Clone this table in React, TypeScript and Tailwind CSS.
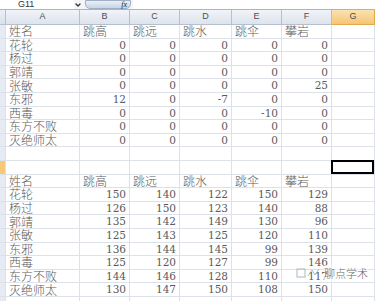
import { ChevronDown } from 'lucide-react'

const cols = ['A', 'B', 'C', 'D', 'E', 'F', 'G']
const heads = ['姓名', '跳高', '跳远', '跳水', '跳伞', '攀岩']

const names = ['花轮', '杨过', '郭靖', '张敏', '东邪', '西毒', '东方不败', '灭绝师太']

const table1 = [
  [0, 0, 0, 0, 0],
  [0, 0, 0, 0, 0],
  [0, 0, 0, 0, 0],
  [0, 0, 0, 0, 25],
  [12, 0, -7, 0, 0],
  [0, 0, 0, -10, 0],
  [0, 0, 0, 0, 0],
  [0, 0, 0, 0, 0],
]

const table2 = [
  [150, 140, 122, 150, 129],
  [126, 150, 123, 140, 88],
  [135, 142, 149, 130, 96],
  [125, 143, 125, 120, 110],
  [136, 144, 145, 99, 139],
  [125, 120, 127, 99, 146],
  [144, 146, 128, 110, 117],
  [130, 147, 150, 108, 150],
]

const cjk = { fontFamily: '"SimSun", "Noto Sans CJK SC", sans-serif' }
const num = { fontFamily: '"DejaVu Serif", "Liberation Serif", serif' }

type Row = { kind: 'head' } | { kind: 'data'; name: string; vals: number[] } | { kind: 'empty'; sel?: boolean }

const rows: Row[] = [
  { kind: 'head' },
  ...names.map((n, i) => ({ kind: 'data' as const, name: n, vals: table1[i] })),
  { kind: 'empty' },
  { kind: 'empty', sel: true },
  { kind: 'head' },
  ...names.map((n, i) => ({ kind: 'data' as const, name: n, vals: table2[i] })),
  { kind: 'empty' },
]

const cell = 'h-[13.6px] border-r border-b border-[#dde2ea] flex items-center overflow-hidden leading-none whitespace-nowrap'
const txt = 'pl-[3px] text-[12px] font-light text-[#5a5a5a]'

function SheetRow({ row }: { row: Row }) {
  const sel = row.kind === 'empty' && row.sel
  return (
    <>
      <div className={`${cell} ${sel ? 'bg-[#f6c979]' : 'bg-[#e6ebf3]'} border-[#b9c3d3]`} />
      {row.kind === 'head' && (
        <>
          {heads.map(h => (
            <div key={h} className={`${cell} ${txt}`} style={cjk}>{h}</div>
          ))}
          <div className={cell} />
        </>
      )}
      {row.kind === 'data' && (
        <>
          <div className={`${cell} ${txt}`} style={cjk}>{row.name}</div>
          {row.vals.map((v, i) => (
            <div key={i} className={`${cell} justify-end pr-[3px] text-[10.5px] text-[#5a5a5a]`} style={num}>{v}</div>
          ))}
          <div className={cell} />
        </>
      )}
      {row.kind === 'empty' && (
        <>
          {[0, 1, 2, 3, 4, 5].map(i => <div key={i} className={cell} />)}
          <div className={`${cell} relative overflow-visible`}>
            {sel && <div className="absolute inset-0 -top-px -left-px border-2 border-black" />}
          </div>
        </>
      )}
    </>
  )
}

export default function App() {
  return (
    <div className="w-[375px] h-[301px] overflow-hidden bg-white relative">
      {/* formula bar strip */}
      <div className="h-[10px] flex items-center bg-[#f3f5f8] border-b border-[#aab4c3] overflow-hidden">
        <div className="w-[74px] h-full flex items-center pl-[18px] text-[9px] leading-none text-[#333] bg-white" style={{ fontFamily: '"Liberation Sans", sans-serif' }}>G11</div>
        <ChevronDown className="w-[8px] h-[8px] text-[#333]" strokeWidth={4} />
        <div className="ml-[3px] w-[46px] h-[9px] rounded-b-[5px] bg-gradient-to-b from-[#e9eff7] to-[#c9d5e4] border border-[#9fb0c6] flex items-center justify-end pr-[3px]">
          <span className="text-[8px] italic leading-none text-[#222]" style={{ fontFamily: '"Liberation Serif", serif' }}>fx</span>
        </div>
        <div className="flex-1 h-full bg-white ml-[2px]" />
      </div>

      <div className="grid grid-cols-[6px_74px_50px_50px_52px_50px_50px_43px]">
        {/* column header */}
        <div className="h-[15px] bg-gradient-to-b from-[#edf1f7] to-[#d9e0ea] border-r border-b border-[#b4bfcf]" />
        {cols.map(c => (
          <div
            key={c}
            className={`h-[15px] flex items-center justify-center text-[9px] text-[#4a4f57] border-r border-b ${
              c === 'G'
                ? 'bg-gradient-to-b from-[#fbe2b1] to-[#f5c575] border-[#e0a94b]'
                : 'bg-gradient-to-b from-[#f1f4f8] to-[#dde3ec] border-[#b4bfcf]'
            }`}
            style={{ fontFamily: '"Liberation Sans", sans-serif' }}
          >
            {c}
          </div>
        ))}
        {rows.map((r, i) => <SheetRow key={i} row={r} />)}
      </div>

      {/* watermark */}
      <div className="absolute left-[296px] top-[265px] flex items-center gap-[2px] whitespace-nowrap text-[11px] font-light text-[#444] opacity-80" style={cjk}>
        <svg width="26" height="12" viewBox="0 0 26 12" fill="none" stroke="#9aa" strokeWidth="1">
          <rect x="1" y="2" width="8" height="8" />
          <path d="M12 9 L16 3 L19 8 L23 2" />
        </svg>
        <span className="bg-white/60">聊点学术</span>
      </div>
    </div>
  )
}
